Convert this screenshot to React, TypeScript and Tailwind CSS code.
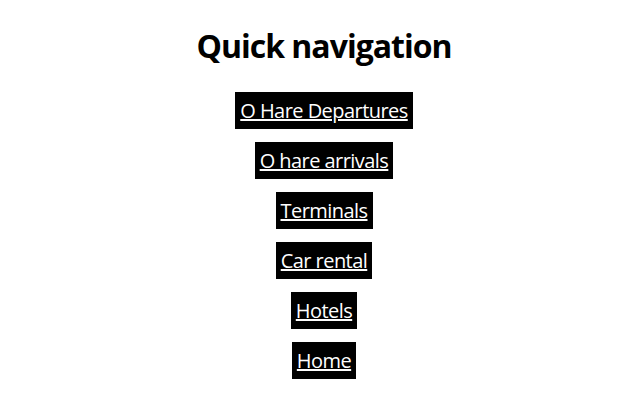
import React from "react";

const links = ["O Hare Departures", "O hare arrivals", "Terminals", "Car rental", "Hotels", "Home"];

export default function App() {
  return (
    <div className="w-[640px] h-[400px] bg-white flex flex-col items-center text-center pl-[8px]" style={{ fontFamily: '"Open Sans", "Noto Sans", sans-serif' }}>
      <h1 className="mt-[24px] text-[32px] leading-[43px] font-bold text-black tracking-[-1px]">Quick navigation</h1>
      <div className="mt-[25px] flex flex-col items-center gap-[13px]">
        {links.map((l) => (
          <a key={l} href="#" className="block bg-black text-white underline px-[5px] py-[5px] text-[20px] leading-[27px] tracking-[-0.55px]">
            {l}
          </a>
        ))}
      </div>
    </div>
  );
}
